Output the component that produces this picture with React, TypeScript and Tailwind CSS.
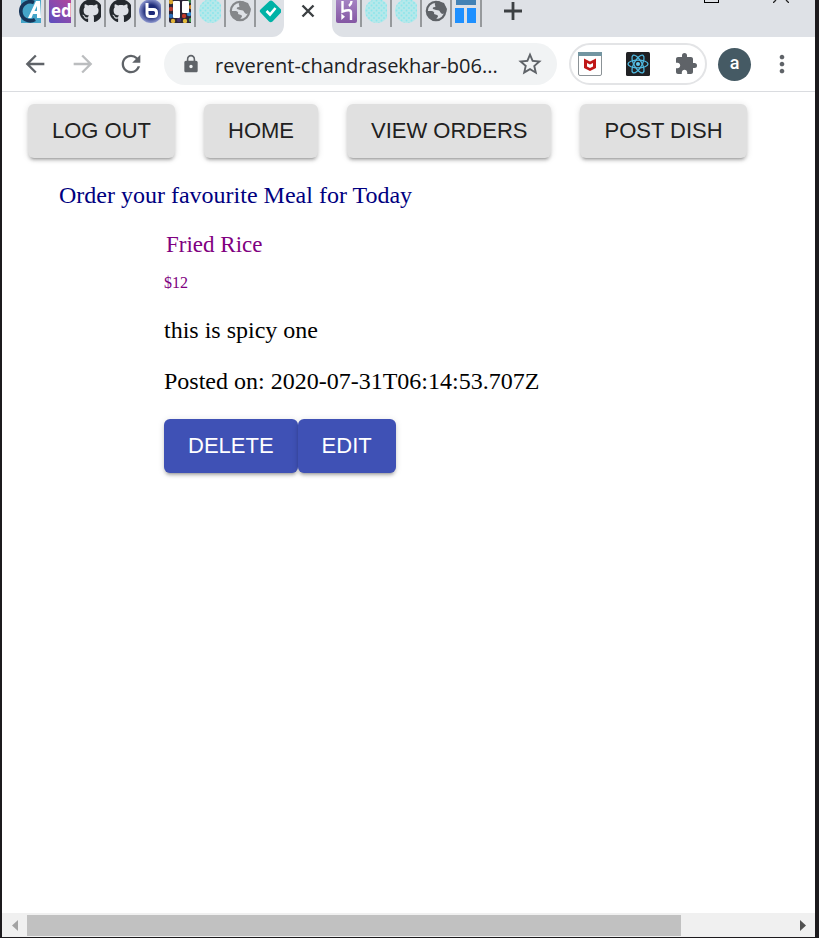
import React from "react";
import { MdArrowBack, MdArrowForward, MdExtension, MdLock, MdMoreVert, MdRefresh, MdStarBorder } from "react-icons/md";
import { FaGithub } from "react-icons/fa";

const iconBox = "size-6 shrink-0";

function AcademyIcon() {
  return (
    <svg viewBox="0 0 24 24" className={iconBox}>
      <rect x="2" width="22" height="24" fill="#45a5c9" />
      <path d="M15 3.500A9.500 9.500 0 1 0 16 20.500" fill="none" stroke="#17365a" strokeWidth="3.600" />
      <path d="M9 19 17 2h4l1 17h-4v-4h-4l-1.500 4zM15.500 12H18V7z" fill="#fff" fillRule="evenodd" />
    </svg>
  );
}

function EdIcon() {
  return (
    <svg viewBox="0 0 24 24" className={iconBox}>
      <defs>
        <linearGradient id="ed" x1="0" y1="1" x2="1" y2="0">
          <stop stopColor="#5b4fc0" />
          <stop offset="1" stopColor="#b8469a" />
        </linearGradient>
      </defs>
      <rect width="24" height="24" rx="2" fill="url(#ed)" />
      <text x="2" y="18" fontFamily="Open Sans, sans-serif" fontWeight="700" fontSize="17" fill="#fff">ed</text>
    </svg>
  );
}

function GithubIcon() {
  return <FaGithub className="size-6 shrink-0 text-[#24292e]" />;
}

function BigBlueIcon() {
  return (
    <svg viewBox="0 0 24 24" className={iconBox}>
      <defs>
        <radialGradient id="ball">
          <stop offset="0.500" stopColor="#1d2a78" />
          <stop offset="1" stopColor="#8d97cf" />
        </radialGradient>
      </defs>
      <circle cx="12" cy="12" r="12" fill="url(#ball)" />
      <path d="M8 4v10.500q0 3 3 3h3.500q3 0 3-3v-1q0-3-3-3H9" fill="none" stroke="#fff" strokeWidth="3" />
    </svg>
  );
}

function BoardIcon() {
  const dots = [
    [2, 3, "#d9a32b"], [2, 10, "#b83b2e"], [2, 17, "#2c6cb5"], [4, 22, "#e0b23a"], [10, 21, "#46316f"],
    [15, 17, "#c0392b"], [20, 15, "#2f86c9"], [22, 21, "#3f9b4b"], [16, 22, "#e2b93b"], [22, 8, "#c9882b"], [21, 2, "#3a7c4c"],
  ] as const;
  return (
    <svg viewBox="0 0 24 24" className={iconBox}>
      <rect width="24" height="24" rx="2" fill="#2b2436" />
      {dots.map(([x, y, c]) => <circle key={`${x}-${y}`} cx={x} cy={y} r="2.200" fill={c} />)}
      <rect x="4" y="2" width="7" height="17" rx="1" fill="#fff" />
      <rect x="13" y="2" width="7" height="12" rx="1" fill="#fff" />
    </svg>
  );
}

function DottedIcon() {
  return (
    <svg viewBox="0 0 24 24" className={iconBox}>
      <defs>
        <pattern id="dots" width="5" height="5" patternUnits="userSpaceOnUse">
          <rect width="5" height="5" fill="#b5e8ea" />
          <circle cx="1.500" cy="1.500" r="0.900" fill="#8ae6ec" />
          <circle cx="4" cy="4" r="0.900" fill="#8ae6ec" />
        </pattern>
      </defs>
      <circle cx="12" cy="12" r="12" fill="url(#dots)" />
    </svg>
  );
}

function GlobeIcon({ color }: { color: string }) {
  return (
    <svg viewBox="0 0 24 24" className={iconBox}>
      <circle cx="11" cy="12" r="9.200" fill="none" stroke={color} strokeWidth="2.200" />
      <path d="M13 2q-4 2-3 4 1 2 0 2-3 0-2 2l3 1q4 0 4 2l2 2 4-1 1-4-3-6zM2 12h5q3 1 2 3l3 1q2 1 0 3l-2 3q-7-1-8-10z" fill={color} />
    </svg>
  );
}

function DiamondIcon() {
  return (
    <svg viewBox="0 0 24 24" className={iconBox}>
      <path d="M10 2.500q2-2 4 0l8 8q1.500 1.500 0 3l-8.500 9q-2 1.500-3.500 0l-8.500-9q-1.500-1.500 0-3z" fill="#00b2a6" />
      <path d="m7.500 12 3.500 3.500L16.500 9" fill="none" stroke="#fff" strokeWidth="2.600" />
    </svg>
  );
}

function HerokuIcon() {
  return (
    <svg viewBox="0 0 24 24" className={iconBox}>
      <defs>
        <linearGradient id="heroku" x1="0" y1="0" x2="0" y2="1">
          <stop stopColor="#a685c4" />
          <stop offset="1" stopColor="#8457a3" />
        </linearGradient>
      </defs>
      <rect x="1" width="21" height="24" rx="2" fill="url(#heroku)" />
      <path d="M7.500 2v10.500q8.500-3 8.500 1V21M16.500 2q0 3-2.500 5" fill="none" stroke="#fff" strokeWidth="2.400" />
      <path d="m6.300 14.500 3.700 3.200-3.700 3.300z" fill="#fff" />
    </svg>
  );
}

function LayoutIcon() {
  return (
    <svg viewBox="0 0 24 24" className={iconBox}>
      <path d="M1 0h20v6H1z" fill="#4382b5" />
      <path d="M0 9h9v15H0zM12 9h9v15h-9z" fill="#1e90ff" />
    </svg>
  );
}

function ShieldIcon() {
  return (
    <svg viewBox="0 0 24 24" className={iconBox}>
      <rect x="0.500" y="0.500" width="23" height="23" rx="1.500" fill="#fff" stroke="#8b9296" />
      <path d="M0 0h24v4H0z" fill="#7395a1" />
      <path d="m6 6.500 6 3 6-3V16l-6 3-6-3zm3 4.500v3.500l3 1.500 3-1.500V11l-3 1.500z" fill="#c01818" fillRule="evenodd" />
    </svg>
  );
}

function AtomIcon() {
  return (
    <svg viewBox="0 0 24 24" className={iconBox}>
      <rect width="24" height="24" rx="1.500" fill="#202124" />
      <circle cx="12" cy="12" r="2" fill="#61c9f0" />
      <g fill="none" stroke="#4fb9e0" strokeWidth="1.300">
        <ellipse cx="12" cy="12" rx="10" ry="3.900" />
        <ellipse cx="12" cy="12" rx="10" ry="3.900" transform="rotate(60 12 12)" />
        <ellipse cx="12" cy="12" rx="10" ry="3.900" transform="rotate(120 12 12)" />
      </g>
    </svg>
  );
}

function Tab({ label, last, children }: { label: string; last?: boolean; children: React.ReactNode }) {
  return (
    <button
      aria-label={label}
      className={`flex h-7 items-end pb-1 pl-[3px] ${last ? "w-7" : "w-[30px] border-r-2 border-[#96999c]"}`}
    >
      <span className="flex h-6 w-[22px] items-end overflow-hidden">{children}</span>
    </button>
  );
}

function TabStrip() {
  return (
    <div className="flex h-[37px] overflow-hidden">
      <div className="flex shrink-0 items-start rounded-br-xl bg-[#dee1e6] pl-3.5">
        <div className="-mt-px flex">
          <Tab label="Academy"><AcademyIcon /></Tab>
          <Tab label="Ed"><EdIcon /></Tab>
          <Tab label="GitHub"><GithubIcon /></Tab>
          <Tab label="GitHub repository"><GithubIcon /></Tab>
          <Tab label="Meeting"><BigBlueIcon /></Tab>
          <Tab label="Board"><BoardIcon /></Tab>
          <Tab label="Site"><DottedIcon /></Tab>
          <Tab label="Web page"><GlobeIcon color="#85878a" /></Tab>
          <Tab label="Deploys" last><DiamondIcon /></Tab>
        </div>
      </div>
      <div className="flex w-12 shrink-0 justify-center pt-1">
        <button aria-label="Close tab" className="size-3.5">
          <svg viewBox="0 0 14 14" className="size-3.5"><path d="m1.500 1.500 11 11M12.500 1.500l-11 11" stroke="#3c4043" strokeWidth="2.400" /></svg>
        </button>
      </div>
      <div className="flex min-w-0 grow items-start rounded-bl-xl bg-[#dee1e6]">
        <div className="-mt-px flex">
          <Tab label="Heroku"><HerokuIcon /></Tab>
          <Tab label="Site two"><DottedIcon /></Tab>
          <Tab label="Site three"><DottedIcon /></Tab>
          <Tab label="New page"><GlobeIcon color="#5f6368" /></Tab>
          <Tab label="Layout"><LayoutIcon /></Tab>
        </div>
        <button aria-label="New tab" className="ml-[22px] mt-0.5 size-[18px]">
          <svg viewBox="0 0 18 18" className="size-[18px]"><path d="M9 0v18M0 9h18" stroke="#3c4043" strokeWidth="2.800" /></svg>
        </button>
        <div className="ml-auto mr-[26px] flex gap-[54px]">
          <button aria-label="Maximize" className="h-[3px] w-[15px] border border-t-0 border-black" />
          <button aria-label="Close" className="h-[3px] w-4">
            <svg viewBox="0 0 16 3" className="h-[3px] w-4"><path d="m0 3 3-3m10 0 3 3" stroke="#222" strokeWidth="1.300" /></svg>
          </button>
        </div>
      </div>
    </div>
  );
}

function Toolbar() {
  return (
    <div className="flex h-[55px] items-center border-b border-[#dadce0] pl-[19px] pr-[19px] text-[#5f6368]">
      <div className="flex shrink-0 gap-5">
        <button aria-label="Back"><MdArrowBack className="size-7" /></button>
        <button aria-label="Forward"><MdArrowForward className="size-7 text-[#bbbdbf]" /></button>
        <button aria-label="Reload"><MdRefresh className="size-7" /></button>
      </div>
      <div className="ml-[19px] flex h-[42px] min-w-0 grow items-center rounded-full bg-[#f1f3f4] pl-[17px] pr-[13px]">
        <MdLock className="size-5 shrink-0" />
        <input
          aria-label="Address"
          readOnly
          value="reverent-chandrasekhar-b06..."
          className="ml-3.5 h-8 min-w-0 grow bg-transparent pt-0.5 font-['Open_Sans','Noto_Sans',sans-serif] text-xl text-[#202124] outline-none"
        />
        <button aria-label="Bookmark"><MdStarBorder className="size-7" /></button>
      </div>
      <div className="ml-3 flex h-[42px] w-[138px] shrink-0 items-center justify-between rounded-full border-2 border-[#e3e4e6] px-[7px]">
        <button aria-label="Shield"><ShieldIcon /></button>
        <button aria-label="React tools"><AtomIcon /></button>
        <button aria-label="Extensions"><MdExtension className="size-6" /></button>
      </div>
      <button className="ml-[11px] flex size-[33px] shrink-0 items-center justify-center rounded-full bg-[#455a64] pb-0.5 font-[Roboto,sans-serif] text-lg font-medium text-white">a</button>
      <button aria-label="Menu" className="ml-[17px] shrink-0"><MdMoreVert className="size-7" /></button>
    </div>
  );
}

const raised = "shadow-[0_4px_2px_-3px_rgba(0,0,0,0.2),0_3px_3px_0_rgba(0,0,0,0.14),0_1px_7px_0_rgba(0,0,0,0.12)]";

function Action({ primary, children }: { primary?: boolean; children: React.ReactNode }) {
  return (
    <button
      className={`h-[54px] shrink-0 rounded-md px-6 font-['Liberation_Sans',Arial,sans-serif] text-[22px] leading-9 whitespace-nowrap ${raised} ${
        primary ? "bg-[#3f51b5] text-white" : "bg-[#e0e0e0] text-[#212121]"
      }`}
    >
      {children}
    </button>
  );
}

export default function App() {
  return (
    <div className="flex min-h-screen bg-[#1c1a1d] pb-px pl-0.5 pr-1">
      <div className="flex min-w-0 grow flex-col bg-white">
        <TabStrip />
        <Toolbar />
        <main className="grow overflow-hidden pb-8 font-['Liberation_Serif','Times_New_Roman',serif] text-2xl leading-7 text-black">
          <nav className="flex gap-[29px] pl-[26px] pt-3">
            <Action>LOG OUT</Action>
            <Action>HOME</Action>
            <Action>VIEW ORDERS</Action>
            <Action>POST DISH</Action>
          </nav>
          <h1 className="mt-[23px] pl-[57px] text-[#000080]">Order your favourite Meal for Today</h1>
          <section className="pl-[162px]">
            <h2 className="mt-[22px] pl-0.5 text-[23px] text-[#800080]">Fried Rice</h2>
            <p className="mt-3.5 text-base leading-5 text-[#800080]">$12</p>
            <p className="mt-[23px]">this is spicy one</p>
            <p className="mt-[23px]">Posted on: 2020-07-31T06:14:53.707Z</p>
            <div className="mt-6 flex">
              <Action primary>DELETE</Action>
              <Action primary>EDIT</Action>
            </div>
          </section>
        </main>
        <div className="flex h-6 items-center bg-[#f0f0f0]">
          <button aria-label="Scroll left" className="flex w-[25px] shrink-0 justify-center">
            <svg viewBox="0 0 6 11" className="h-[11px] w-1.5"><path d="M6 0v11L0 5.500z" fill="#a3a3a3" /></svg>
          </button>
          <div className="grow"><div className="h-[21px] w-6/7 bg-[#c1c1c1]" /></div>
          <button aria-label="Scroll right" className="flex w-[25px] shrink-0 justify-center">
            <svg viewBox="0 0 6 11" className="h-[11px] w-1.5"><path d="M0 0v11l6-5.500z" fill="#505050" /></svg>
          </button>
        </div>
      </div>
    </div>
  );
}
